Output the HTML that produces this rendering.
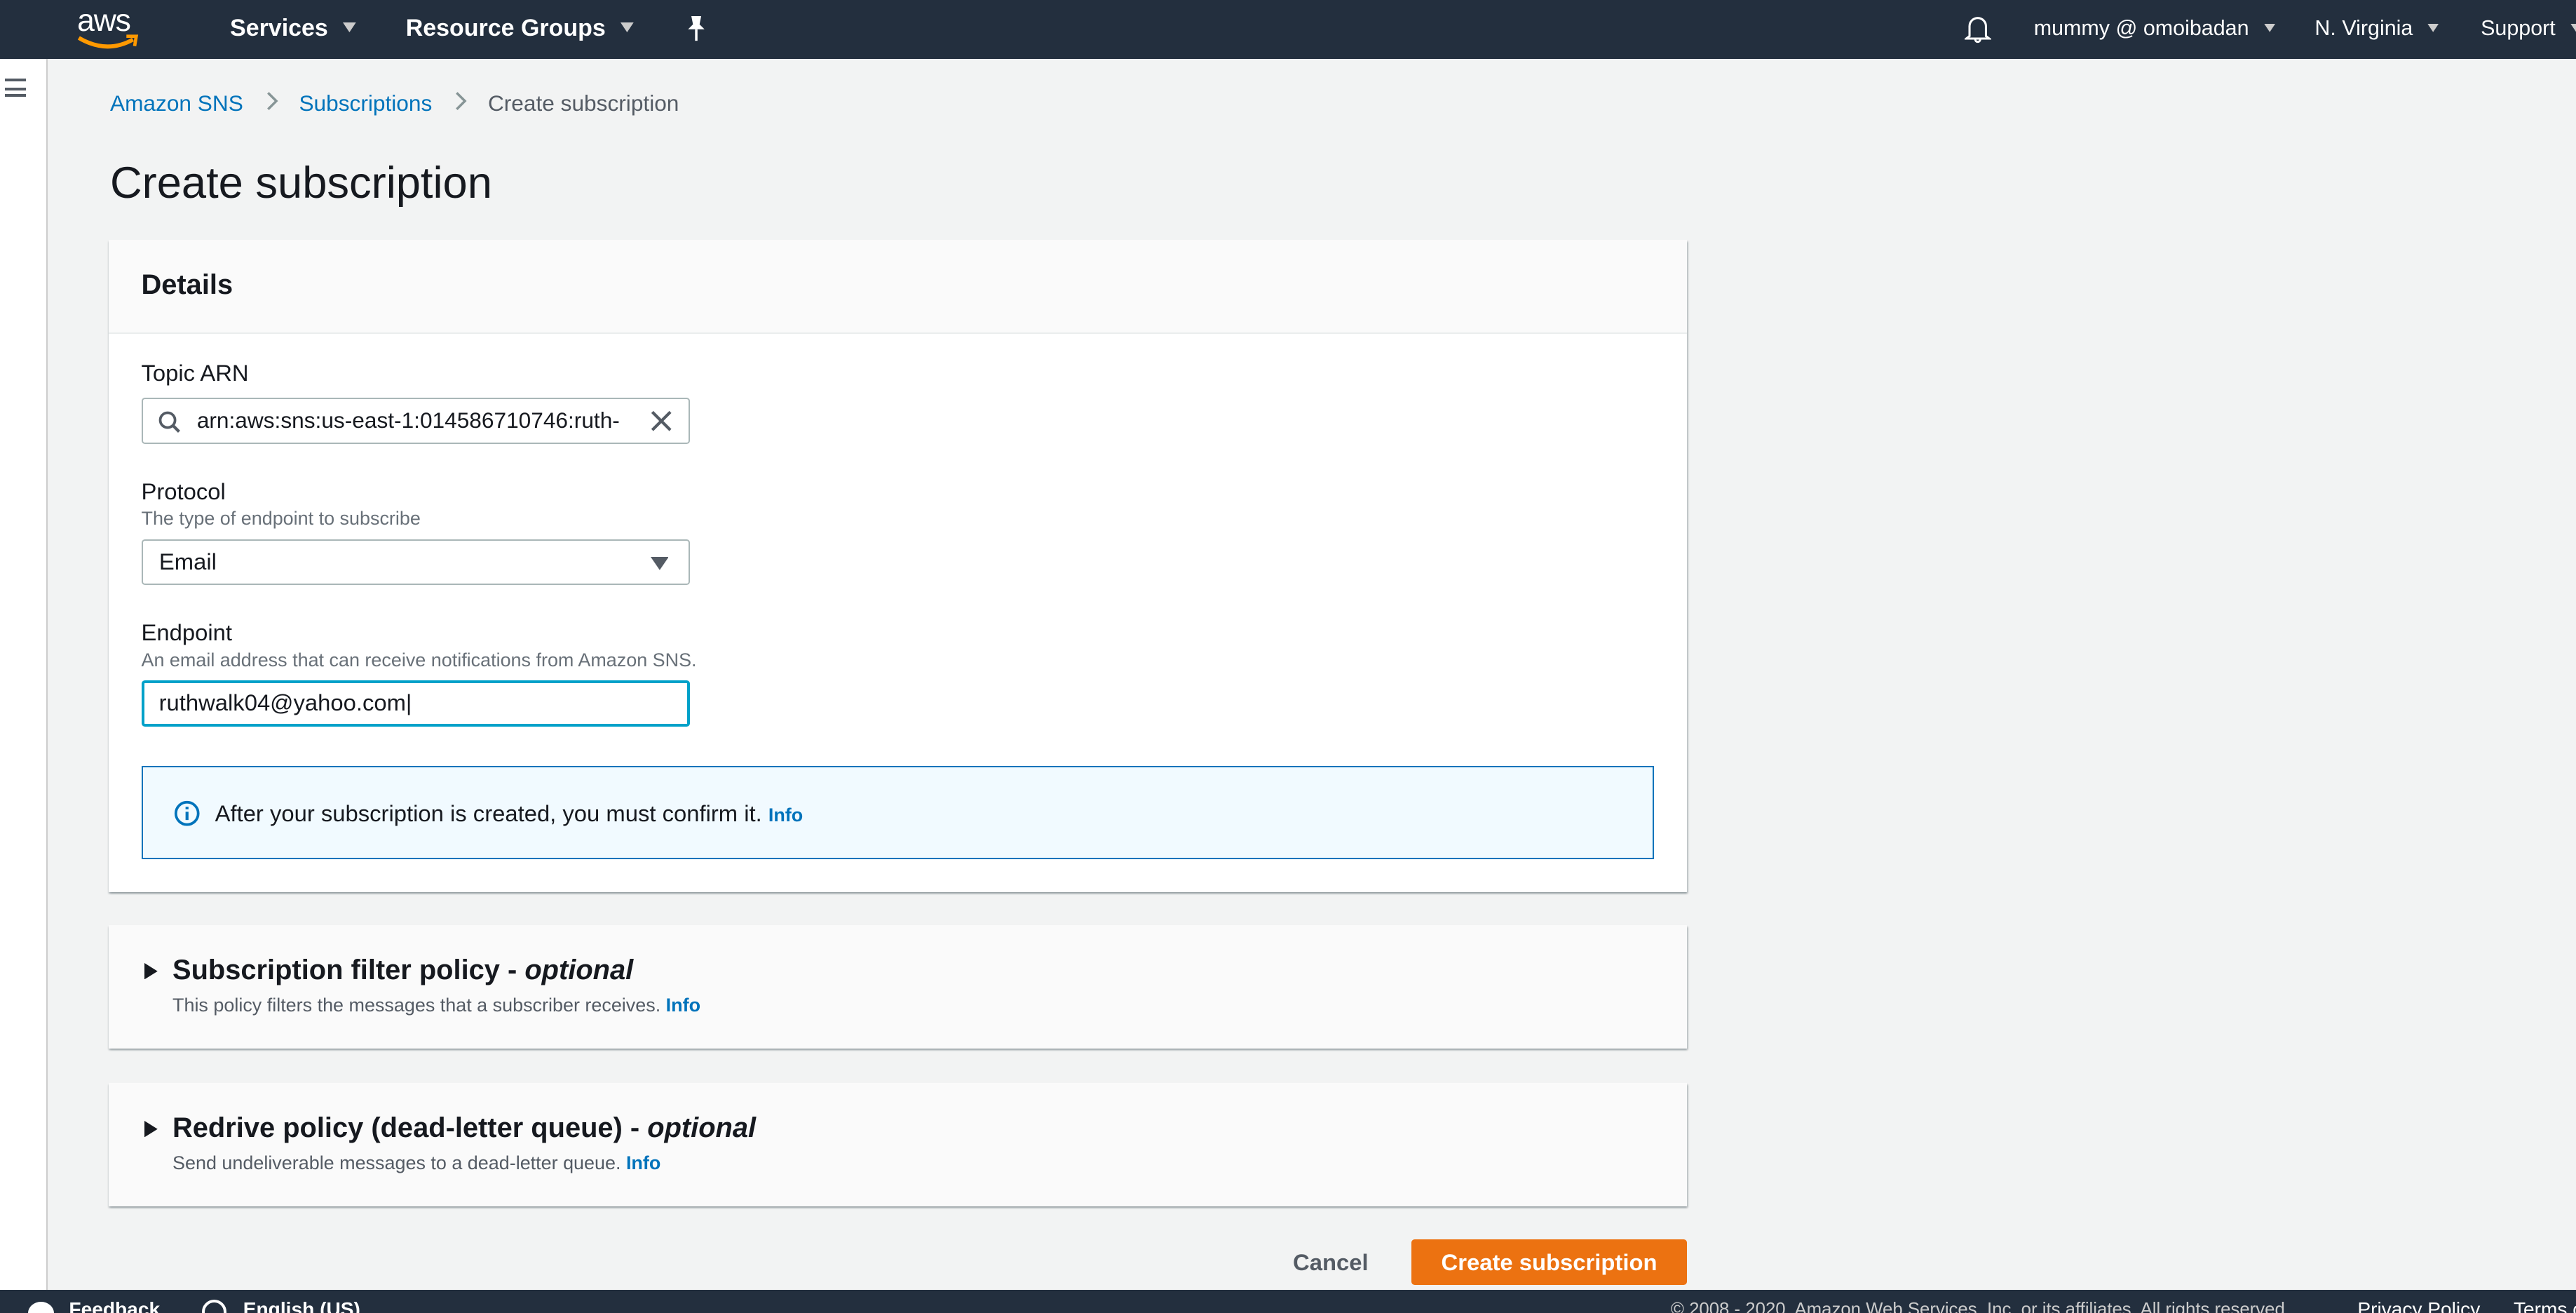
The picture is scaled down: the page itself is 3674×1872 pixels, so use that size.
<!DOCTYPE html>
<html><head><meta charset="utf-8"><style>
*{box-sizing:border-box;margin:0;padding:0}
html,body{width:3674px;height:1872px;overflow:hidden;background:#f2f3f3}
#r{zoom:2.3431;width:1568px;height:799px;position:relative;font-family:"Liberation Sans",Arial,sans-serif;color:#16191f;overflow:hidden}
.a{position:absolute}
.top{left:0;top:0;width:1568px;height:36px;background:#232f3e;color:#fff;font-size:14.5px;font-weight:bold}
.top span{position:absolute;top:9px;white-space:nowrap}
.cr{display:inline-block;margin-left:9px;vertical-align:2px}
.side{left:0;top:36px;width:29px;height:749px;background:#fff;border-right:1px solid #ccc}
.foot{left:0;top:785px;width:1568px;height:14px;background:#232f3e;color:#fff;font-size:12px}
.panel{background:#fff;box-shadow:0 1px 1px rgba(0,28,36,.3),1px 1px 1px rgba(0,28,36,.15);}
.lbl{font-size:14px;color:#16191f}
.desc{font-size:11.5px;color:#687078}
.inp{border:1px solid #aab7b8;border-radius:2px;background:#fff;font-size:14px;height:28px;width:334px}
.link{color:#0073bb}
.ph{background:#fafafa}
</style></head><body><div id="r">
<div class="a top">
 <span style="left:47px;top:2px;font-weight:normal;font-size:19px;letter-spacing:-0.5px">aws</span>
 <svg class="a" style="left:47px;top:20px" width="40" height="12" viewBox="0 0 40 12"><path d="M1 3 Q18 13 34 4" stroke="#f90" stroke-width="2.5" fill="none"/><path d="M30 2 L36 2 L35 8" stroke="#f90" stroke-width="2" fill="none"/></svg>
 <span style="left:140px">Services<svg class="cr" width="8" height="6" viewBox="0 0 8 6"><path d="M0 0H8L4 6Z" fill="#ccc"/></svg></span>
 <span style="left:247px">Resource Groups<svg class="cr" width="8" height="6" viewBox="0 0 8 6"><path d="M0 0H8L4 6Z" fill="#ccc"/></svg></span>
 <svg class="a" style="left:418px;top:10px" width="12" height="15" viewBox="0 0 12 15"><path d="M3 0 H9 L8 5 L11 8 H1 L4 5 Z" fill="#fff"/><path d="M6 8 V15" stroke="#fff" stroke-width="1.5"/></svg>
 <svg class="a" style="left:1196px;top:9px" width="16" height="18" viewBox="0 0 16 18"><path d="M3 13 V7 A5 5 0 0 1 13 7 V13 L15 14.5 H1 Z M6.5 15 A1.5 1.5 0 0 0 9.5 15" stroke="#fff" stroke-width="1.3" fill="none"/></svg>
 <span style="left:1238px;font-weight:normal;font-size:13px;top:10px">mummy @ omoibadan<svg class="cr" width="7" height="5" viewBox="0 0 8 6"><path d="M0 0H8L4 6Z" fill="#ccc"/></svg></span>
 <span style="left:1409px;font-weight:normal;font-size:13px;top:10px">N. Virginia<svg class="cr" width="7" height="5" viewBox="0 0 8 6"><path d="M0 0H8L4 6Z" fill="#ccc"/></svg></span>
 <span style="left:1510px;font-weight:normal;font-size:13px;top:10px">Support<svg class="cr" width="7" height="5" viewBox="0 0 8 6"><path d="M0 0H8L4 6Z" fill="#ccc"/></svg></span>
</div>
<div class="a side"><div class="a" style="left:3px;top:12px;width:13px;height:11px;border-top:2px solid #545b64;border-bottom:2px solid #545b64"><div style="margin-top:3.5px;height:2px;background:#545b64"></div></div></div>

<div class="a" style="left:67px;top:55px;font-size:13.5px;white-space:nowrap"><span class="link">Amazon SNS</span><svg style="margin:0 12px 0 14px" width="8" height="12" viewBox="0 0 8 12"><path d="M1 1 L6 6 L1 11" stroke="#879596" stroke-width="1.5" fill="none"/></svg><span class="link">Subscriptions</span><svg style="margin:0 12px 0 14px" width="8" height="12" viewBox="0 0 8 12"><path d="M1 1 L6 6 L1 11" stroke="#879596" stroke-width="1.5" fill="none"/></svg><span style="color:#545b64">Create subscription</span></div>
<div class="a" style="left:67px;top:96px;font-size:27px">Create subscription</div>

<div class="a panel" style="left:66px;top:146px;width:961px;height:397px">
 <div class="ph" style="height:57px;border-bottom:1px solid #eaeded;padding:18px 20px;font-size:17px;font-weight:bold">Details</div>
 <div class="a lbl" style="left:20px;top:73px">Topic ARN</div>
 <div class="a inp" style="left:20px;top:96px">
  <svg class="a" style="left:9px;top:7px" width="14" height="14" viewBox="0 0 14 14"><circle cx="6" cy="6" r="4.5" stroke="#545b64" stroke-width="1.6" fill="none"/><path d="M9.3 9.3 L13 13" stroke="#545b64" stroke-width="1.8"/></svg>
  <span class="a" style="left:33px;top:5px;white-space:nowrap;font-size:13.5px">arn:aws:sns:us-east-1:014586710746:ruth-</span>
  <svg class="a" style="left:309px;top:7px" width="13" height="13" viewBox="0 0 13 13"><path d="M1 1 L12 12 M12 1 L1 12" stroke="#545b64" stroke-width="1.8"/></svg>
 </div>
 <div class="a lbl" style="left:20px;top:145px">Protocol</div>
 <div class="a desc" style="left:20px;top:163px">The type of endpoint to subscribe</div>
 <div class="a inp" style="left:20px;top:182px"><span class="a" style="left:10px;top:5px">Email</span><svg class="a" style="left:309px;top:10px" width="11" height="8" viewBox="0 0 11 8"><path d="M0 0H11L5.5 8Z" fill="#545b64"/></svg></div>
 <div class="a lbl" style="left:20px;top:231px">Endpoint</div>
 <div class="a desc" style="left:20px;top:249px">An email address that can receive notifications from Amazon SNS.</div>
 <div class="a inp" style="left:20px;top:268px;border:2px solid #00a1c9"><span class="a" style="left:9px;top:4px">ruthwalk04@yahoo.com|</span></div>
 <div class="a" style="left:20px;top:320px;width:921px;height:57px;background:#f1faff;border:1px solid #0073bb">
  <svg class="a" style="left:19px;top:20px" width="16" height="16" viewBox="0 0 16 16"><circle cx="8" cy="8" r="6.8" stroke="#0073bb" stroke-width="1.6" fill="none"/><path d="M8 7 V12 M8 4 V5.5" stroke="#0073bb" stroke-width="1.8"/></svg>
  <span class="a" style="left:44px;top:20px;font-size:14px;white-space:nowrap">After your subscription is created, you must confirm it. <b class="link" style="font-size:11.5px">Info</b></span>
 </div>
</div>

<div class="a panel ph" style="left:66px;top:563px;width:961px;height:75px">
 <svg class="a" style="left:22px;top:23px" width="8" height="10" viewBox="0 0 8 10"><path d="M0 0L8 5L0 10Z" fill="#16191f"/></svg>
 <div class="a" style="left:39px;top:18px;font-size:17px;font-weight:bold;white-space:nowrap">Subscription filter policy - <i>optional</i></div>
 <div class="a desc" style="left:39px;top:42px;color:#545b64">This policy filters the messages that a subscriber receives. <b class="link">Info</b></div>
</div>
<div class="a panel ph" style="left:66px;top:659px;width:961px;height:75px">
 <svg class="a" style="left:22px;top:23px" width="8" height="10" viewBox="0 0 8 10"><path d="M0 0L8 5L0 10Z" fill="#16191f"/></svg>
 <div class="a" style="left:39px;top:18px;font-size:17px;font-weight:bold;white-space:nowrap">Redrive policy (dead-letter queue) - <i>optional</i></div>
 <div class="a desc" style="left:39px;top:42px;color:#545b64">Send undeliverable messages to a dead-letter queue. <b class="link">Info</b></div>
</div>

<div class="a" style="left:787px;top:760px;font-size:14px;font-weight:bold;color:#545b64">Cancel</div>
<div class="a" style="left:859px;top:754px;width:168px;height:28px;background:#ec7211;border-radius:2px;color:#fff;font-size:14px;font-weight:bold;text-align:center;line-height:28px">Create subscription</div>

<div class="a foot">
 <span class="a" style="left:17px;top:7px;width:16px;height:14px;border-radius:50%;background:#fff"></span>
 <span class="a" style="left:42px;top:5px;font-weight:bold">Feedback</span>
 <span class="a" style="left:123px;top:6px;width:15px;height:15px;border-radius:50%;border:2px solid #fff"></span>
 <span class="a" style="left:148px;top:5px;font-weight:bold">English (US)</span>
 <span class="a" style="left:1017px;top:6px;font-size:11px;color:#ccc;white-space:nowrap">© 2008 - 2020, Amazon Web Services, Inc. or its affiliates. All rights reserved.</span>
 <span class="a" style="left:1435px;top:5px;white-space:nowrap">Privacy Policy</span>
 <span class="a" style="left:1530px;top:5px;white-space:nowrap">Terms of Use</span>
</div>
</div></body></html>
